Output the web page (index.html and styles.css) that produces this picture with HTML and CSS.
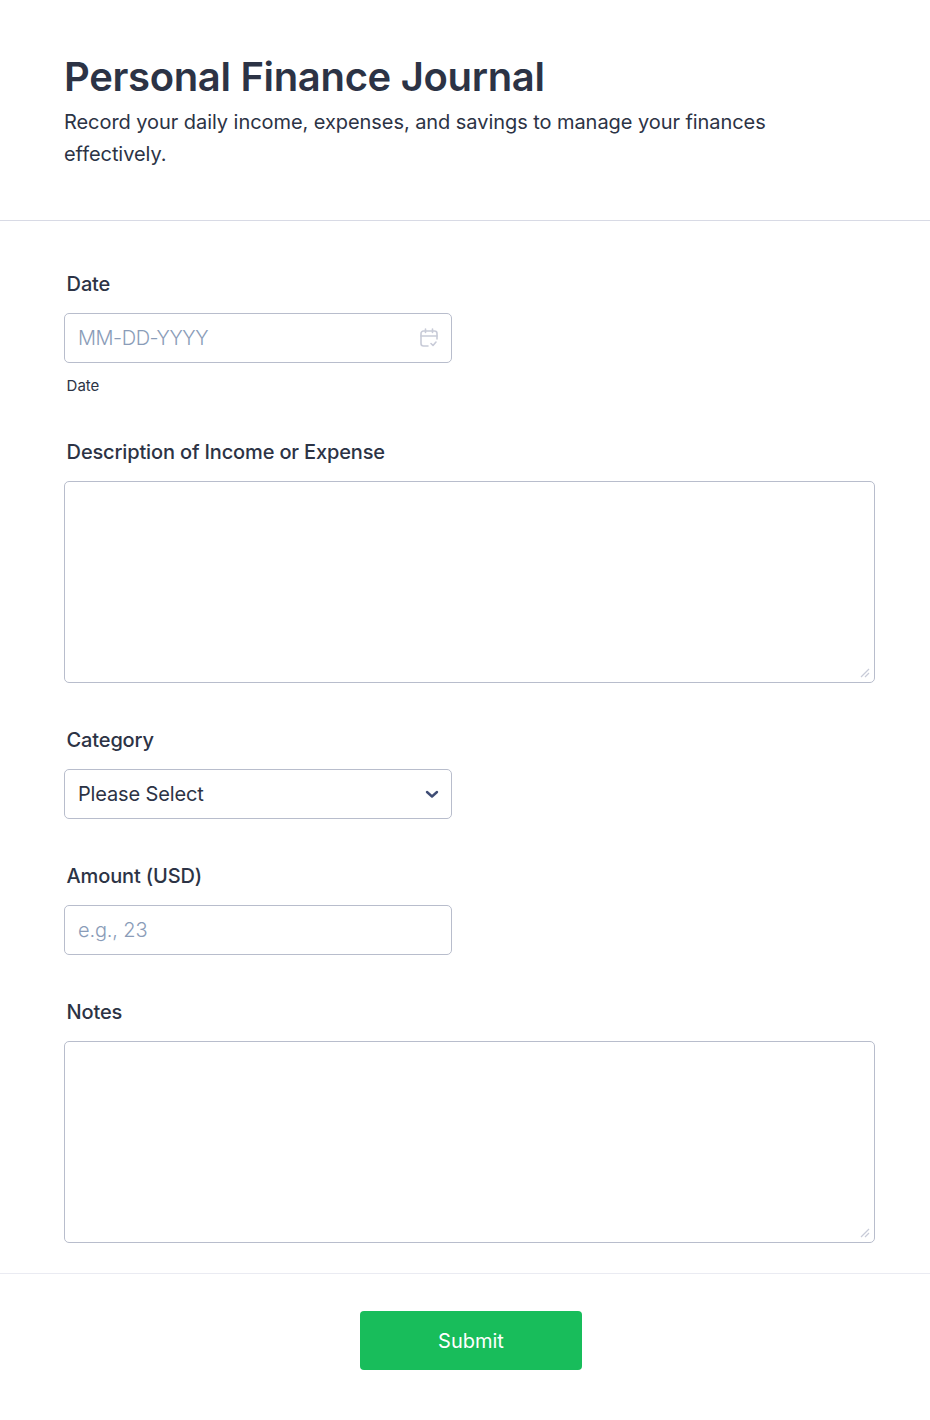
FILE: index.html
```html
<!DOCTYPE html>
<html lang="en">
<head>
    <meta charset="UTF-8">
    <meta name="viewport" content="width=device-width, initial-scale=1.0">
    <title>Personal Finance Journal</title>
    <link rel="stylesheet" href="styles.css">
</head>
<body>
    <form class="form">
        <div class="form-header">
            <h1>Personal Finance Journal</h1>
            <p>Record your daily income, expenses, and savings to manage your finances effectively.</p>
        </div>
        <div class="form-body">
            <div class="field field-date">
                <label class="field-label">Date</label>
                <div class="input-box half">
                    <span class="placeholder date-text">MM-DD-YYYY</span>
                    <svg class="calendar" width="18" height="20" viewBox="0 0 18 20" fill="none" stroke="#c8cbd8" stroke-width="1.6" stroke-linecap="round" stroke-linejoin="round">
                        <path d="M8 18H3.500a2.500 2.500 0 0 1-2.500-2.500V5.500A2.500 2.500 0 0 1 3.500 3h11A2.500 2.500 0 0 1 17 5.500V11"/>
                        <path d="M1 8h16M5.500 1v3.500M12.500 1v3.500"/>
                        <path d="M11 15.500l2 2 3-3.500"/>
                    </svg>
                </div>
                <span class="sublabel">Date</span>
            </div>
            <div class="field field-desc">
                <label class="field-label">Description of Income or Expense</label>
                <div class="textarea-wrap">
                    <textarea class="textarea"></textarea>
                    <svg class="grip" width="10" height="10" viewBox="0 0 10 10" fill="none" stroke="#c8cbd8" stroke-width="1.200">
                        <path d="M1 9l8-8M5 9l4-4"/>
                    </svg>
                </div>
            </div>
            <div class="field field-category">
                <label class="field-label">Category</label>
                <div class="input-box half">
                    <span class="value">Please Select</span>
                    <svg class="chevron" width="14" height="10" viewBox="0 0 14 10" fill="none" stroke="#3f4d75" stroke-width="2.400" stroke-linecap="round" stroke-linejoin="round">
                        <path d="M2 3l5 4.500 5-4.500"/>
                    </svg>
                </div>
            </div>
            <div class="field field-amount">
                <label class="field-label">Amount (USD)</label>
                <div class="input-box half">
                    <span class="placeholder">e.g., 23</span>
                </div>
            </div>
            <div class="field field-notes">
                <label class="field-label">Notes</label>
                <div class="textarea-wrap">
                    <textarea class="textarea"></textarea>
                    <svg class="grip" width="10" height="10" viewBox="0 0 10 10" fill="none" stroke="#c8cbd8" stroke-width="1.200">
                        <path d="M1 9l8-8M5 9l4-4"/>
                    </svg>
                </div>
            </div>
        </div>
        <div class="form-footer">
            <button type="button" class="submit">Submit</button>
        </div>
    </form>
</body>
</html>
```

FILE: styles.css
```css
* {
    box-sizing: border-box;
}
body {
    margin: 0;
    font-family: Inter, "Liberation Sans", sans-serif;
    background-color: #fff;
    color: #2c3345;
}
.form-header {
    height: 221px;
    padding: 52px 64px 0;
    border-bottom: 1px solid #d8dae5;
}
.form-header h1 {
    margin: 0;
    font-size: 40px;
    line-height: 50px;
    font-weight: 600;
    letter-spacing: -0.33px;
}
.form-header p {
    margin: 4px 0 0;
    font-size: 20px;
    line-height: 32px;
    font-weight: 400;
    letter-spacing: -0.06px;
}
.form-body {
    padding: 50px 55px 0 64px;
}
.field-label {
    display: block;
    margin-left: 2.600px;
    margin-bottom: 16px;
    font-size: 20px;
    line-height: 26px;
    font-weight: 500;
    letter-spacing: -0.15px;
}
.input-box {
    display: flex;
    align-items: center;
    justify-content: space-between;
    height: 50px;
    padding: 0 13px;
    border: 1px solid #b8bdcc;
    border-radius: 5px;
    font-size: 20px;
    letter-spacing: -0.15px;
}
.half {
    width: 388px;
}
.placeholder {
    color: #8a9cb8;
    font-weight: 300;
}
.date-text {
    letter-spacing: -0.45px;
}
.chevron {
    margin-right: -1px;
}
.sublabel {
    display: block;
    margin: 14px 0 0 2.600px;
    font-size: 15px;
    line-height: 18px;
}
.textarea-wrap {
    position: relative;
}
.textarea {
    display: block;
    width: 100%;
    height: 202px;
    border: 1px solid #b8bdcc;
    border-radius: 5px;
    outline: none;
    resize: none;
}
.grip {
    position: absolute;
    right: 5px;
    bottom: 5px;
}
.field-desc,
.field-category,
.field-amount,
.field-notes {
    margin-top: 44px;
}
.form-footer {
    display: flex;
    justify-content: center;
    margin-top: 30px;
    padding: 37px 0 50px 12px;
    border-top: 1px solid #eaebf2;
}
.submit {
    width: 222px;
    height: 59px;
    border: none;
    border-radius: 4px;
    background-color: #18bd5b;
    color: #fff;
    font-family: inherit;
    font-size: 20px;
    font-weight: 400;
}
```
